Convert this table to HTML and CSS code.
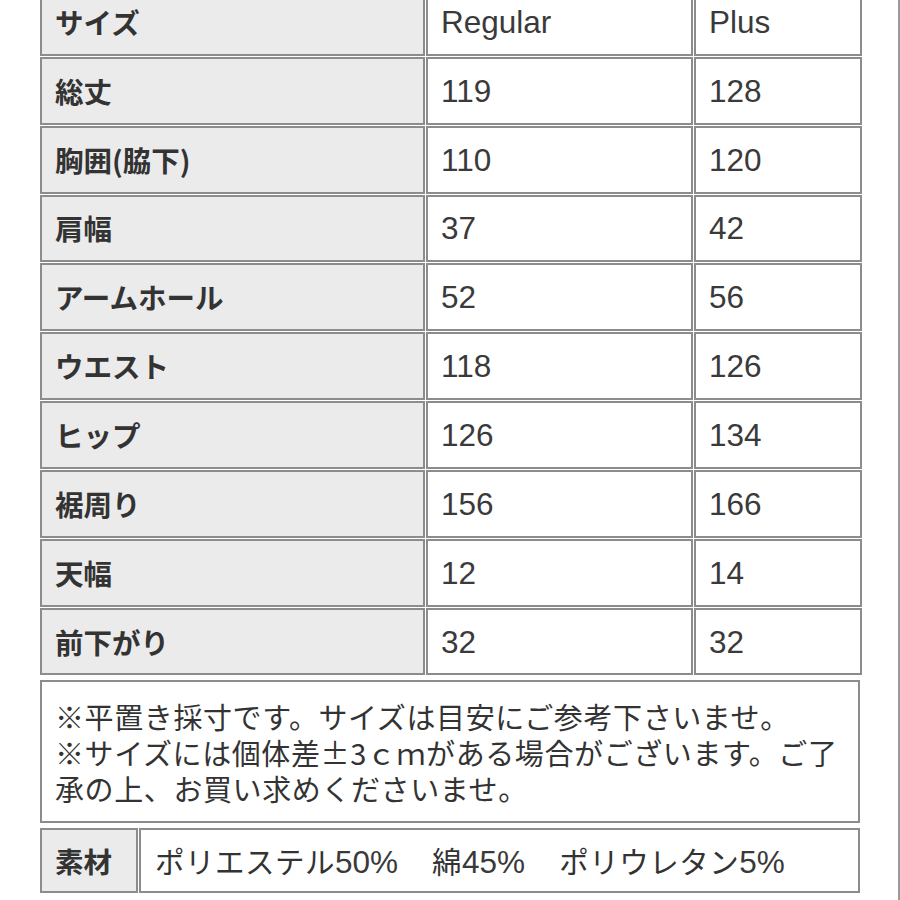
FILE: index.html
```html
<!DOCTYPE html>
<html lang="ja">
<head>
<meta charset="utf-8">
<link rel="stylesheet" href="styles.css">
</head>
<body>
<div class="frame">
<div class="page">
  <table class="sizes">
    <colgroup><col class="c-label"><col class="c-reg"><col class="c-plus"></colgroup>
    <tr><th>サイズ</th><td>Regular</td><td>Plus</td></tr>
    <tr><th>総丈</th><td>119</td><td>128</td></tr>
    <tr><th>胸囲(脇下)</th><td>110</td><td>120</td></tr>
    <tr><th>肩幅</th><td>37</td><td>42</td></tr>
    <tr><th>アームホール</th><td>52</td><td>56</td></tr>
    <tr><th>ウエスト</th><td>118</td><td>126</td></tr>
    <tr><th>ヒップ</th><td>126</td><td>134</td></tr>
    <tr><th>裾周り</th><td>156</td><td>166</td></tr>
    <tr><th>天幅</th><td>12</td><td>14</td></tr>
    <tr><th>前下がり</th><td>32</td><td>32</td></tr>
  </table>
  <table class="notes">
    <tr><td>※平置き採寸です。サイズは目安にご参考下さいませ。<br>※サイズには個体差±3ｃｍがある場合がございます。ご了<br>承の上、お買い求めくださいませ。</td></tr>
  </table>
  <table class="material">
    <tr><th>素材</th><td>ポリエステル<span class="num">50%</span><span class="sp">　</span>綿<span class="num">45%</span><span class="sp">　</span>ポリウレタン<span class="num">5%</span></td></tr>
  </table>
</div>
</div>
</body>
</html>
```
FILE: styles.css
```css
html, body {
  margin: 0;
  padding: 0;
  background: #ffffff;
}
body {
  font-family: "Noto Sans CJK JP", "Liberation Sans", sans-serif;
  color: #333333;
  overflow: hidden;
}
.frame {
  width: 900px;
  height: 900px;
  box-sizing: border-box;
  border-right: 2px solid #9a9a9a;
  overflow: hidden;
}
.page {
  width: 822px;
  margin-left: 39px;
  margin-top: -13px;
  display: flex;
  flex-direction: column;
  gap: 3px;
}
table {
  width: 822px;
  border-collapse: separate;
  border-spacing: 1px;
  table-layout: fixed;
}
th, td {
  border: 2px solid #8c8c8c;
  font-size: 28.5px;
  line-height: 36px;
  text-align: left;
  vertical-align: middle;
  padding: 0 0 0 13px;
}
th {
  background: #ebebeb;
  font-weight: bold;
  color: #333333;
}
td {
  background: #ffffff;
  font-weight: normal;
}
.sizes col.c-label { width: 385px; }
.sizes col.c-reg { width: 267px; }
.sizes col.c-plus { width: 168px; }
.sizes tr { height: 67.85px; }
.sizes td {
  font-family: "Liberation Sans", "Noto Sans CJK JP", sans-serif;
  font-size: 31.5px;
  color: #3a3a3a;
}
.notes td {
  font-size: 29px;
  letter-spacing: 0.6px;
  padding: 16px 10px 15px 13px;
  line-height: 36px;
  height: 108px;
}
.material th {
  width: 81px;
  height: 61px;
}
.material td {
  padding-left: 14px;
  font-size: 29.5px;
  letter-spacing: 0.5px;
}
.sp {
  display: inline-block;
  width: 34px;
}
.num {
  font-family: "Liberation Sans", sans-serif;
  font-size: 31.5px;
  letter-spacing: 0;
  color: #3a3a3a;
}
```
